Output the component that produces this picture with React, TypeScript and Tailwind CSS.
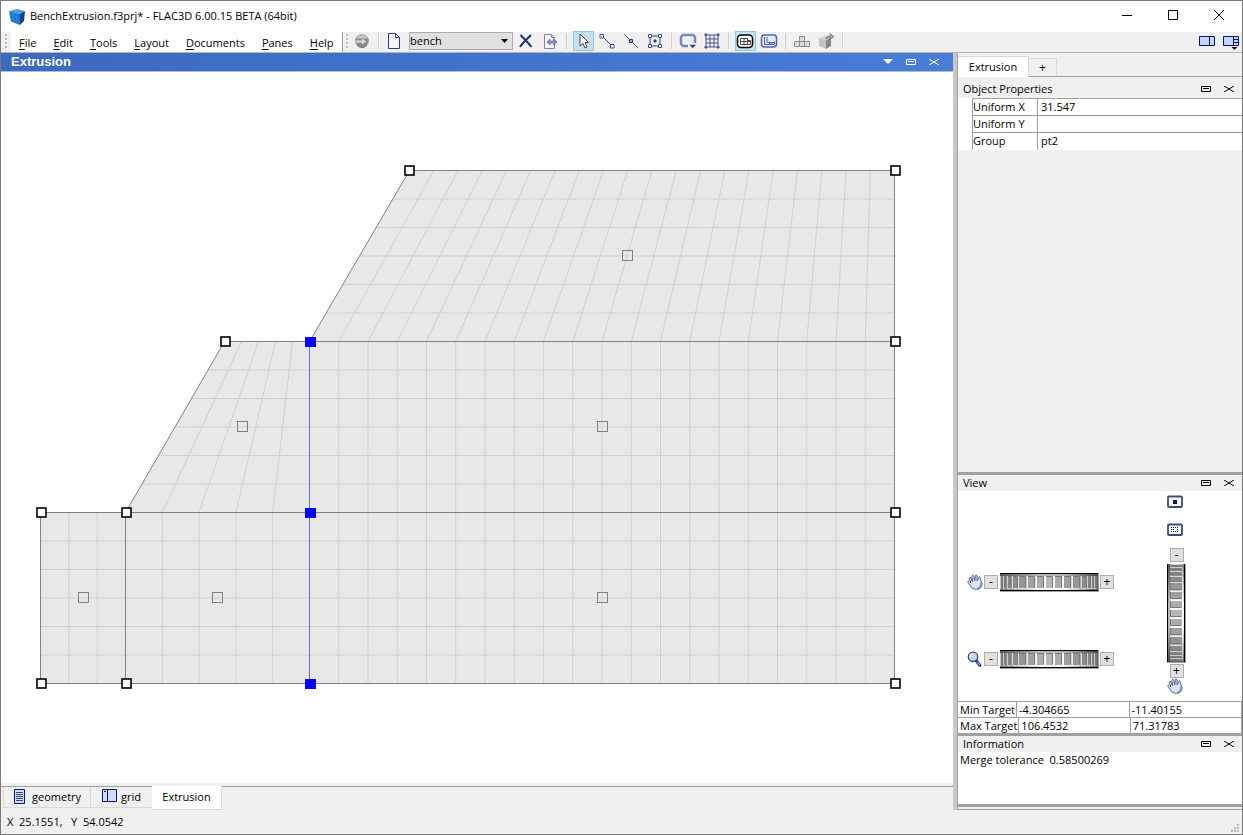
import type { ReactNode } from 'react'

// ============================================================================
// Extrusion workspace — toolbar, mesh canvas, property panes and status bar.
// ============================================================================

const MENUS = ['File', 'Edit', 'Tools', 'Layout', 'Documents', 'Panes', 'Help']

type Point = [number, number]

interface Block {
    // top left, top right, bottom right, bottom left
    corners: [Point, Point, Point, Point]
    cols: number
    rows: number
}

const BLOCKS: Block[] = [
    { corners: [[408, 98], [893, 98], [893, 269], [308, 269]], cols: 20, rows: 6 },
    { corners: [[223, 269], [308, 269], [308, 440], [124, 440]], cols: 5, rows: 6 },
    { corners: [[308, 269], [893, 269], [893, 440], [308, 440]], cols: 20, rows: 6 },
    { corners: [[39, 440], [124, 440], [124, 611], [39, 611]], cols: 3, rows: 6 },
    { corners: [[124, 440], [308, 440], [308, 611], [124, 611]], cols: 5, rows: 6 },
    { corners: [[308, 440], [893, 440], [893, 611], [308, 611]], cols: 20, rows: 6 },
]

const NODES: Point[] = [
    [408, 98], [894, 98], [224, 269], [894, 269], [40, 440], [125, 440],
    [894, 440], [40, 611], [125, 611], [894, 611],
]

const SELECTED: Point[] = [[309, 269], [309, 440], [309, 611]]

function lerp(a: Point, b: Point, t: number): Point {
    return [a[0] + (b[0] - a[0]) * t, a[1] + (b[1] - a[1]) * t]
}

function gridPath({ corners: [tl, tr, br, bl], cols, rows }: Block) {
    const parts: string[] = []
    for (let i = 1; i < cols; i++) {
        parts.push(`M${lerp(tl, tr, i / cols)}L${lerp(bl, br, i / cols)}`)
    }
    for (let j = 1; j < rows; j++) {
        parts.push(`M${lerp(tl, bl, j / rows)}L${lerp(tr, br, j / rows)}`)
    }
    return parts.join('')
}

function Mesh() {
    return (
        <svg className="block h-full w-full" role="img" aria-label="Extrusion mesh">
            <g transform="translate(.5 .5)">
                {BLOCKS.map((b, i) => (
                    <g key={i}>
                        <polygon points={b.corners.join(' ')} fill="#e8e8e8" />
                        <path d={gridPath(b)} stroke="#d0d0d0" fill="none" />
                    </g>
                ))}
                {BLOCKS.map((b, i) => (
                    <polygon key={i} points={b.corners.join(' ')} fill="none" stroke="#828282" />
                ))}
                <path d="M308 269V611" stroke="#6c6cd0" />
                {BLOCKS.map((b, i) => {
                    const cx = Math.round(b.corners.reduce((sum, p) => sum + p[0], 0) / 4)
                    const cy = Math.round(b.corners.reduce((sum, p) => sum + p[1], 0) / 4)
                    return <rect key={i} x={cx - 5} y={cy - 6} width="10" height="10" fill="none" stroke="#808080" />
                })}
                {NODES.map(([x, y]) => (
                    <rect key={`${x}-${y}`} x={x - 4.5} y={y - 4.5} width="9" height="9" fill="#fff" stroke="#000" strokeWidth="1.6" />
                ))}
                {SELECTED.map(([x, y]) => (
                    <rect key={y} x={x - 5.500} y={y - 4.500} width="11" height="10" fill="#00f" />
                ))}
            </g>
        </svg>
    )
}

/* ---------- Toolbar pieces ---------- */

function Grip() {
    return (
        <svg width="4" height="16" viewBox="0 0 4 16" className="shrink-0">
            {[0, 4, 8, 12].map((y) => (
                <g key={y}>
                    <path d={`M2 ${y + 1}h2v2h-2z`} fill="#fff" />
                    <path d={`M1 ${y}h2v2h-2z`} fill="#b8b8b8" />
                </g>
            ))}
        </svg>
    )
}

function Separator() {
    return (
        <div className="flex h-full w-[9px] shrink-0 items-center justify-center">
            <div className="h-4 w-px bg-[#d0d0d0]" />
        </div>
    )
}

function Tool({ label, active, children }: { label: string; active?: boolean; children: ReactNode }) {
    return (
        <button aria-label={label} className="flex h-5 w-6 shrink-0 items-center justify-center">
            <span className={active
                ? 'flex h-5 w-[21px] items-center justify-center border border-[#90c8f0] bg-[#c4e0f4]'
                : 'flex h-5 w-[21px] items-center justify-center'}
            >
                <svg width="18" height="18" viewBox="0 0 18 18" fill="none" stroke="#2c3c8c" className="shrink-0">
                    {children}
                </svg>
            </span>
        </button>
    )
}

function Toolbar() {
    return (
        <div className="flex h-[21px] shrink-0 items-center border-b border-[#b4b4b4] bg-[#f0f0f0]">
            <div className="flex w-[10px] shrink-0 justify-center"><Grip /></div>
            <nav className="flex h-full w-[331px] shrink-0 items-center gap-px bg-white pt-[2px] text-[11px]">
                {MENUS.map((m) => (
                    <button key={m} className="px-2 leading-5 whitespace-nowrap">
                        <span className="underline underline-offset-2">{m[0]}</span>{m.slice(1)}
                    </button>
                ))}
            </nav>
            <div className="flex h-full w-2 shrink-0 items-center justify-center border-l border-[#a0a0a0]"><Grip /></div>
            <div className="flex h-full min-w-0 flex-1 items-center pb-[2px]">
                <Tool label="Globe">
                    <circle cx="9" cy="9" r="6.500" fill="#8c8c8c" stroke="#a4a4a4" />
                    <path d="M4 6c2-4 8-4 10 0z" fill="#c0c0c0" stroke="#c8c8c8" />
                    <path d="M3 8.500h6V6.500l4 3-4 3v-2H3z" fill="#dcdcdc" stroke="none" />
                    <path d="M4 13c3 3 7 3 10 0" stroke="#707070" />
                </Tool>
                <div className="flex h-full w-2 shrink-0 items-center justify-center">
                    <div className="h-4 w-px bg-[#d0d0d0]" />
                </div>
                <Tool label="New">
                    <path d="M3.500 1.500h7l4 4v11h-11z" fill="#f4f6ff" />
                    <path d="M10.500 1.500v4h4" />
                </Tool>
                <div className="relative mr-px ml-[3px] shrink-0">
                    <select aria-label="Extrusion set" className="block h-[18px] w-[104px] appearance-none border border-[#adadad] bg-[#e1e1e1] pr-4 text-[11px] leading-4">
                        <option>bench</option>
                    </select>
                    <svg width="7" height="4" viewBox="0 0 7 4" className="pointer-events-none absolute top-[7px] right-[5px]">
                        <path d="M0 0h7L3.500 4z" fill="#000" />
                    </svg>
                </div>
                <Tool label="Delete">
                    <path d="M3.500 3c3 3 7 7 11 12M14 3c-4 4-8 7-11 12" stroke="#20307c" strokeWidth="2" />
                </Tool>
                <Tool label="Export">
                    <path d="M3.500 2.500h7l3 3v11h-10z" fill="#f4f6ff" stroke="#7c86bc" />
                    <path d="M10.500 2.500v3h3" stroke="#7c86bc" />
                    <path d="M6 10l3-3v2h3.500V7l3.500 3-3.500 3v-2H9v2z" fill="#8490c4" stroke="#5c68a4" strokeWidth=".7" />
                </Tool>
                <Separator />
                <Tool label="Select" active>
                    <path d="M6 2v12l3-2.500 2 4.500 2-1-2-4.500h3.500z" fill="#fff" stroke="#444" />
                </Tool>
                <Tool label="Draw edges">
                    <path d="M5 5l9 9" />
                    <path d="M2 2.500h3.500V6H2zM12.500 12.500H16V16h-3.500z" fill="#fff" stroke="#3c4ca4" />
                </Tool>
                <Tool label="Split edge">
                    <path d="M2 2l14 14" stroke="#5c68a4" />
                    <circle cx="9" cy="9" r="1.700" fill="#b8c4ec" strokeWidth="1.300" />
                </Tool>
                <Tool label="Draw block">
                    <path d="M4 4h10v10H4z" />
                    <path d="M2.500 2.500h3v3h-3zM12.500 2.500h3v3h-3zM2.500 12.500h3v3h-3zM12.500 12.500h3v3h-3z" fill="#fff" stroke="#3c4ca4" />
                    <path d="M8 8h2v2H8z" fill="#2c3c8c" />
                </Tool>
                <Separator />
                <Tool label="Background">
                    <path d="M9 14H4l-2-2V5l2-2h10l2 2v6" stroke="#7884bc" strokeWidth="2.400" />
                    <path d="M10 12.500h7.500l-3.700 4z" fill="#2c3c8c" stroke="#f0f0f0" strokeWidth=".5" />
                </Tool>
                <Tool label="Ruler grid">
                    <path d="M3 3h12v12H3zM7 3v12M11 3v12M3 7h12M3 11h12" stroke="#4454a4" />
                    <path d="M2 2h1.500v1.500H2zM14.500 2H16v1.500h-1.500zM2 14.500h1.500V16H2zM14.500 14.500H16V16h-1.500z" fill="#fff" />
                </Tool>
                <Separator />
                <Tool label="Construction view" active>
                    <rect x="1.500" y="3" width="15" height="12.500" rx="3.500" fill="#fff" stroke="#000" strokeWidth="1.500" />
                    <path d="M4.500 6.500h7v2h3v4h-10zM8 6.500v6M11.500 8.500v4M4.500 9.500h10" stroke="#333" strokeWidth=".9" />
                </Tool>
                <Tool label="Extrusion view">
                    <rect x="1.500" y="3" width="15" height="12" rx="3" fill="#e8ecfc" stroke="#5464b4" strokeWidth="1.500" />
                    <path d="M4.500 5v7.500h10M7 5v5.500h7.500M9.500 10.500v2M12 10.500v2M14.500 9.500v3" stroke="#3c4ca4" strokeWidth=".9" />
                </Tool>
                <Separator />
                <Tool label="Build blocks">
                    <path d="M1.500 9.500h15v5h-15zM6.500 9.500v5M11.500 9.500v5M6.500 4.500h5v5h-5z" fill="#dcdcdc" stroke="#8c8c8c" />
                </Tool>
                <Tool label="Extrude">
                    <path d="M2 6l6-3 6 3-5 2z" fill="#d8d8d8" stroke="none" />
                    <path d="M2 6l7 2v9l-7-3z" fill="#c4c4c4" stroke="none" />
                    <path d="M9 8l5-2v8l-5 3z" fill="#888" stroke="none" />
                    <path d="M8.500 7C9 4.500 10 4 13 4V1.500l4 3.200-4 3.300V6c-2 0-3 0-4.500 1z" fill="#999" stroke="#777" strokeWidth=".6" />
                </Tool>
                <Separator />
                <div className="ml-auto flex gap-2 pr-[3px] pb-px">
                    <button aria-label="Control panel">
                        <svg width="16" height="12" viewBox="0 0 16 12" className="block" fill="#c8d4f4" stroke="#00147c">
                            <path d="M.5 1.500h15v9H.5zM10.500 1.500v9" />
                        </svg>
                    </button>
                    <button aria-label="Panel layout">
                        <svg width="16" height="12" viewBox="0 0 16 12" className="block overflow-visible" fill="#c8d4f4" stroke="#00147c">
                            <path d="M.5 1.500h15v9H.5zM10.500 1.500v9M10.500 4.500h5M10.500 7.500h5" />
                            <path d="M8.500 12h6l-3 3z" fill="#000" stroke="none" />
                        </svg>
                    </button>
                </div>
            </div>
        </div>
    )
}

/* ---------- Pane pieces ---------- */

function RestoreIcon() {
    return (
        <svg width="10" height="6" viewBox="0 0 10 6" className="block" fill="none" stroke="currentColor">
            <path d="M.5 .5h9v5h-9zM2 2.500h6" />
        </svg>
    )
}

function CrossIcon() {
    return (
        <svg width="10" height="6" viewBox="0 0 10 6" className="block" fill="none" stroke="currentColor">
            <path d="M0 0l5 3 5 3M10 0L5 3 0 6" />
        </svg>
    )
}

function PaneHeader({ title, tall }: { title: string; tall?: boolean }) {
    return (
        <div className={tall
            ? 'flex h-[21px] shrink-0 items-center bg-[#f0f0f0] pt-[2px] pr-2 pl-[5px]'
            : 'flex h-4 shrink-0 items-center bg-[#f0f0f0] pr-2 pl-[5px]'}
        >
            <h2 className="flex-1 leading-4">{title}</h2>
            <div className="flex gap-[13px]">
                <button aria-label={`Restore ${title}`}><RestoreIcon /></button>
                <button aria-label={`Close ${title}`}><CrossIcon /></button>
            </div>
        </div>
    )
}

function PropertyRow({ name, value }: { name: string; value: string }) {
    const id = name.toLowerCase().replace(' ', '-')
    return (
        <tr className="h-[17px] border-t border-[#a0a0a0]">
            <th scope="row" className="w-[65px] border-x border-[#a0a0a0] p-0 text-left font-normal">
                <label htmlFor={id} className="block leading-4">{name}</label>
            </th>
            <td className="p-0">
                <input id={id} defaultValue={value} className="block h-4 w-full bg-white pl-[3px] outline-none" />
            </td>
        </tr>
    )
}

// [start, width] of every notch along the wheel, tighter near both ends
const NOTCHES = [
    [1, 1], [4, 2], [8, 3], [13, 5], [19, 7], [28, 7], [37, 7], [46, 7],
    [55, 7], [64, 7], [73, 7], [82, 5], [88, 3], [92, 2], [95, 2],
]

function Wheel({ vertical }: { vertical?: boolean }) {
    const id = vertical ? 'wheel-v' : 'wheel-h'
    return (
        <svg
            width={vertical ? 19 : 99}
            height={vertical ? 99 : 19}
            className={vertical ? 'mt-[2px] block shrink-0' : 'ml-px block shrink-0'}
            role="img"
            aria-label="Thumb wheel"
        >
            <defs>
                <linearGradient id={id}>
                    <stop offset="0" stopColor="#707070" />
                    <stop offset=".4" stopColor="#f4f4f4" />
                    <stop offset=".65" stopColor="#f4f4f4" />
                    <stop offset="1" stopColor="#606060" />
                </linearGradient>
            </defs>
            <g transform={vertical ? 'matrix(0 1 1 0 0 0)' : undefined}>
                <path d="M0 0h99v19H0z" fill="#a0a0a0" />
                <path d="M0 0h98v18H0z" fill={`url(#${id})`} />
                <path d="M0 1h98v2H0z" fill="#000" opacity=".25" />
                <path d="M0 0h98v1H0zM0 17h98v1H0z" fill="#000" />
                {NOTCHES.map(([x, w]) => {
                    const shade = Math.round(184 - Math.abs(x + w / 2 - 49) * 1.3)
                    return (
                        <g key={x}>
                            <path d={`M${x} 3h${w}v12h-${w}z`} fill={`rgb(${shade},${shade},${shade})`} />
                            <path d={`M${x - 0.5} 3v12.500h${w}`} fill="none" stroke="#fff" opacity=".6" />
                            <path d={`M${x} 3.500h${w - 0.5}v10.500`} fill="none" stroke="#787878" />
                        </g>
                    )
                })}
            </g>
        </svg>
    )
}

function StepButton({ sign, label }: { sign: string; label: string }) {
    return (
        <button aria-label={label} className="flex size-[14px] shrink-0 items-center justify-center border border-[#adadad] bg-[#e1e1e1] text-[12px] leading-3">
            {sign}
        </button>
    )
}

function HandIcon() {
    return (
        <svg width="16" height="16" viewBox="0 0 16 16" className="block shrink-0">
            <path
                d="M5.500 14.500C4 12.500 1.500 10 .8 8.200c-.2-1 .9-1.300 1.700-.6L4 9 2.200 4.500c-.3-1.200 1-1.600 1.600-.6L5.500 7.500 4.800 2.300c0-1.300 1.500-1.400 1.900-.2L7.800 6.800 8.300 1.700c.2-1.100 1.600-1 1.700.2L10.200 7l1.500-3.600c.5-1 1.700-.5 1.500.6-.3 2 1.800 3.800 1.800 6 0 3-2 5.300-5 5.300-2 0-3.200 0-4.500-.8z"
                fill="#dce4fa"
                stroke="#46507e"
                strokeWidth=".9"
            />
            <path d="M13.800 8c.8 3-.4 5.800-3.600 6.500" stroke="#7c8cc8" strokeWidth="1.500" fill="none" />
        </svg>
    )
}

function MagnifierIcon() {
    return (
        <svg width="16" height="16" viewBox="0 0 16 16" className="block shrink-0">
            <path d="M9 9.500l4 5" stroke="#38447c" strokeWidth="3" strokeLinecap="round" />
            <path d="M10.500 11l2.500 3.500" stroke="#a4b4e4" />
            <circle cx="6" cy="5.800" r="4.700" fill="#c4d0f0" stroke="#38447c" strokeWidth="1.300" />
            <path d="M3.500 6c0-2 1.300-3 3-3" stroke="#fff" strokeWidth="1.300" fill="none" />
        </svg>
    )
}

function ScreenIcon({ dotted }: { dotted?: boolean }) {
    return (
        <svg width="16" height="13" viewBox="0 0 16 13" className="block">
            <rect x="1" y="1.500" width="14" height="10.500" rx="1" fill="#fff" stroke="#3c4880" strokeWidth="1.800" />
            {dotted
                ? <path d="M4 4.500h8M4 6.500h3M10 6.500h2M4 8.500h8" fill="none" stroke="#00147c" strokeDasharray="1 1" />
                : <path d="M6 5h4v4H6z" fill="#00147c" />}
        </svg>
    )
}

function ViewPane() {
    return (
        <div className="flex h-[210px] shrink-0 bg-white pl-[9px]">
            <div className="flex flex-col gap-[57px] pt-[81px]">
                <div className="flex h-5 items-center gap-px">
                    <HandIcon />
                    <StepButton sign="-" label="Pan left" />
                    <Wheel />
                    <StepButton sign="+" label="Pan right" />
                </div>
                <div className="flex h-5 items-center gap-px">
                    <MagnifierIcon />
                    <StepButton sign="-" label="Zoom out" />
                    <Wheel />
                    <StepButton sign="+" label="Zoom in" />
                </div>
            </div>
            <div className="ml-[53px] flex flex-col items-start pt-1">
                <button aria-label="Reset view"><ScreenIcon /></button>
                <button aria-label="Zoom extents" className="mt-[15px]"><ScreenIcon dotted /></button>
                <div className="mt-3 flex flex-col items-center">
                    <StepButton sign="-" label="Pan up" />
                    <Wheel vertical />
                    <div className="mt-px">
                        <StepButton sign="+" label="Pan down" />
                    </div>
                </div>
                <HandIcon />
            </div>
        </div>
    )
}

function TargetRow({ name, x, y }: { name: string; x: string; y: string }) {
    return (
        <div className="flex h-4 shrink-0 border-t border-[#a0a0a0] bg-white">
            <span className="shrink-0 border-r border-[#a0a0a0] pr-px pl-[2px] leading-4">{name}</span>
            <input aria-label={`${name} x`} defaultValue={x} className="h-[15px] w-0 flex-1 border-r border-[#a0a0a0] pt-px pl-[2px] outline-none" />
            <input aria-label={`${name} y`} defaultValue={y} className="h-[15px] w-0 flex-1 border-r border-[#a0a0a0] pt-px pl-[2px] outline-none" />
        </div>
    )
}

function Sidebar() {
    return (
        <aside className="flex w-[285px] shrink-0 flex-col border-l border-[#a0a0a0]">
            <div className="flex h-6 shrink-0 items-end pt-[3px]">
                <button className="h-[21px] w-[71px] shrink-0 border-t border-r border-[#d9d9d9] bg-white">Extrusion</button>
                <div className="flex h-full flex-1 items-end border-b border-[#a0a0a0]">
                    <button aria-label="Add tab" className="h-[18px] w-7 border-t border-r border-[#d9d9d9] text-[12px] leading-4">+</button>
                </div>
            </div>
            <PaneHeader title="Object Properties" tall />
            <div className="bg-white pl-[14px]">
                <table className="w-full table-fixed border-collapse">
                    <tbody>
                        <PropertyRow name="Uniform X" value="31.547" />
                        <PropertyRow name="Uniform Y" value="" />
                        <PropertyRow name="Group" value="pt2" />
                    </tbody>
                </table>
            </div>
            <div className="flex-1" />
            <div className="h-[3px] shrink-0 bg-[#a0a0a0]" />
            <PaneHeader title="View" />
            <ViewPane />
            <TargetRow name="Min Target" x="-4.304665" y="-11.40155" />
            <TargetRow name="Max Target" x="106.4532" y="71.31783" />
            <div className="h-[3px] shrink-0 bg-[#a0a0a0]" />
            <PaneHeader title="Information" />
            <p className="h-[52px] shrink-0 bg-white px-[2px] leading-4">
                Merge tolerance&nbsp; 0.58500269
            </p>
            <div className="h-[3px] shrink-0 bg-[#a0a0a0]" />
            <div className="h-[3px] shrink-0 border-b border-[#a0a0a0]" />
        </aside>
    )
}

function DocumentTabs() {
    return (
        <div className="flex h-[27px] shrink-0 items-start pt-[3px]">
            <div className="flex h-full flex-1 items-start border-t border-[#a0a0a0] pl-[2px]">
                <button className="flex h-[21px] w-[88px] items-center gap-[6px] border-r border-b border-l border-[#d9d9d9] pl-[10px]">
                    <svg width="12" height="15" viewBox="0 0 12 15" className="mb-[2px]" fill="#d4dcf8" stroke="#00147c">
                        <path d="M.5 .5h10v14H.5z" />
                        <path d="M2 3.500h7M2 5.500h7M2 7.500h7M2 9.500h7M2 11.500h7" stroke="#38488c" />
                    </svg>
                    geometry
                </button>
                <button className="flex h-[21px] w-[61px] items-center gap-1 border-b border-[#d9d9d9] pl-[11px]">
                    <svg width="15" height="13" viewBox="0 0 15 13" className="mb-[3px]" fill="#d4dcf8" stroke="#00147c">
                        <path d="M.5 .5h14v12H.5z" />
                        <path d="M5.500 .5v12" />
                        <path d="M2 2.500h2" />
                    </svg>
                    grid
                </button>
                <button className="-mt-px h-6 w-[70px] shrink-0 border-r border-b border-[#d9d9d9] bg-white">Extrusion</button>
            </div>
        </div>
    )
}

export default function App() {
    return (
        <div className="flex h-screen flex-col overflow-hidden border border-[#7a7a7a] bg-[#f0f0f0] font-['Open_Sans','Noto_Sans',sans-serif] text-[11px] text-black">
            <header className="flex h-[31px] shrink-0 items-center bg-white pl-2">
                <svg width="16" height="16" viewBox="0 0 16 16" className="shrink-0">
                    <path d="M0 2l8-2 8 2-5 3z" fill="#4c9ce0" />
                    <path d="M0 2l11 3v11L2 12.500z" fill="#1878cc" />
                    <path d="M11 5l5-3-1 10-4 4z" fill="#0c4484" />
                    <path d="M.5 5.500l10.500 3M1 9l10 3M4 3v10M7.500 4v11" stroke="#3c94e0" strokeWidth=".5" />
                </svg>
                <h1 className="ml-[5px] flex-1">BenchExtrusion.f3prj* - FLAC3D 6.00.15 BETA (64bit)</h1>
                <div className="flex h-full pb-[3px]">
                    <button aria-label="Minimize" className="flex w-[46px] items-center justify-center">
                        <svg width="10" height="10" viewBox="0 0 10 10"><path d="M0 5.500h10" stroke="#000" /></svg>
                    </button>
                    <button aria-label="Maximize" className="flex w-[46px] items-center justify-center">
                        <svg width="10" height="10" viewBox="0 0 10 10"><path d="M.5 .5h9v9h-9z" stroke="#000" fill="none" /></svg>
                    </button>
                    <button aria-label="Close" className="flex w-[46px] items-center justify-center">
                        <svg width="10" height="10" viewBox="0 0 10 10"><path d="M0 0l10 10M10 0L0 10" stroke="#000" /></svg>
                    </button>
                </div>
            </header>
            <Toolbar />
            <div className="flex min-h-0 flex-1">
                <main className="flex min-w-0 flex-1 flex-col">
                    <div className="flex h-[19px] shrink-0 items-center border-b border-[#b4bcc8] bg-linear-to-r from-[#3c69c1] to-[#487dd8] pr-[14px] pl-[10px] text-white">
                        <h2 className="flex-1 font-['Liberation_Sans',sans-serif] text-[13px] leading-4 font-bold">Extrusion</h2>
                        <div className="flex items-center gap-[13px]">
                            <button aria-label="Pane menu">
                                <svg width="10" height="6" viewBox="0 0 10 6" className="block"><path d="M0 0h10L5 5z" fill="#fff" /></svg>
                            </button>
                            <button aria-label="Restore pane"><RestoreIcon /></button>
                            <button aria-label="Close pane"><CrossIcon /></button>
                        </div>
                    </div>
                    <div className="min-h-0 flex-1 bg-white"><Mesh /></div>
                    <DocumentTabs />
                </main>
                <div className="w-1 shrink-0 bg-[#c8c8c8]" />
                <Sidebar />
            </div>
            <footer className="flex h-[24px] shrink-0 items-center justify-between pl-[6px]">
                <span>X&nbsp; 25.1551,&nbsp;&nbsp; Y&nbsp; 54.0542</span>
                <svg width="10" height="10" viewBox="0 0 10 10" className="mr-px self-end" fill="#b8b8b8">
                    <path d="M6 0h2v2h-2zM3 3h2v2h-2zM6 3h2v2h-2zM0 6h2v2h-2zM3 6h2v2h-2zM6 6h2v2h-2z" />
                </svg>
            </footer>
        </div>
    )
}
